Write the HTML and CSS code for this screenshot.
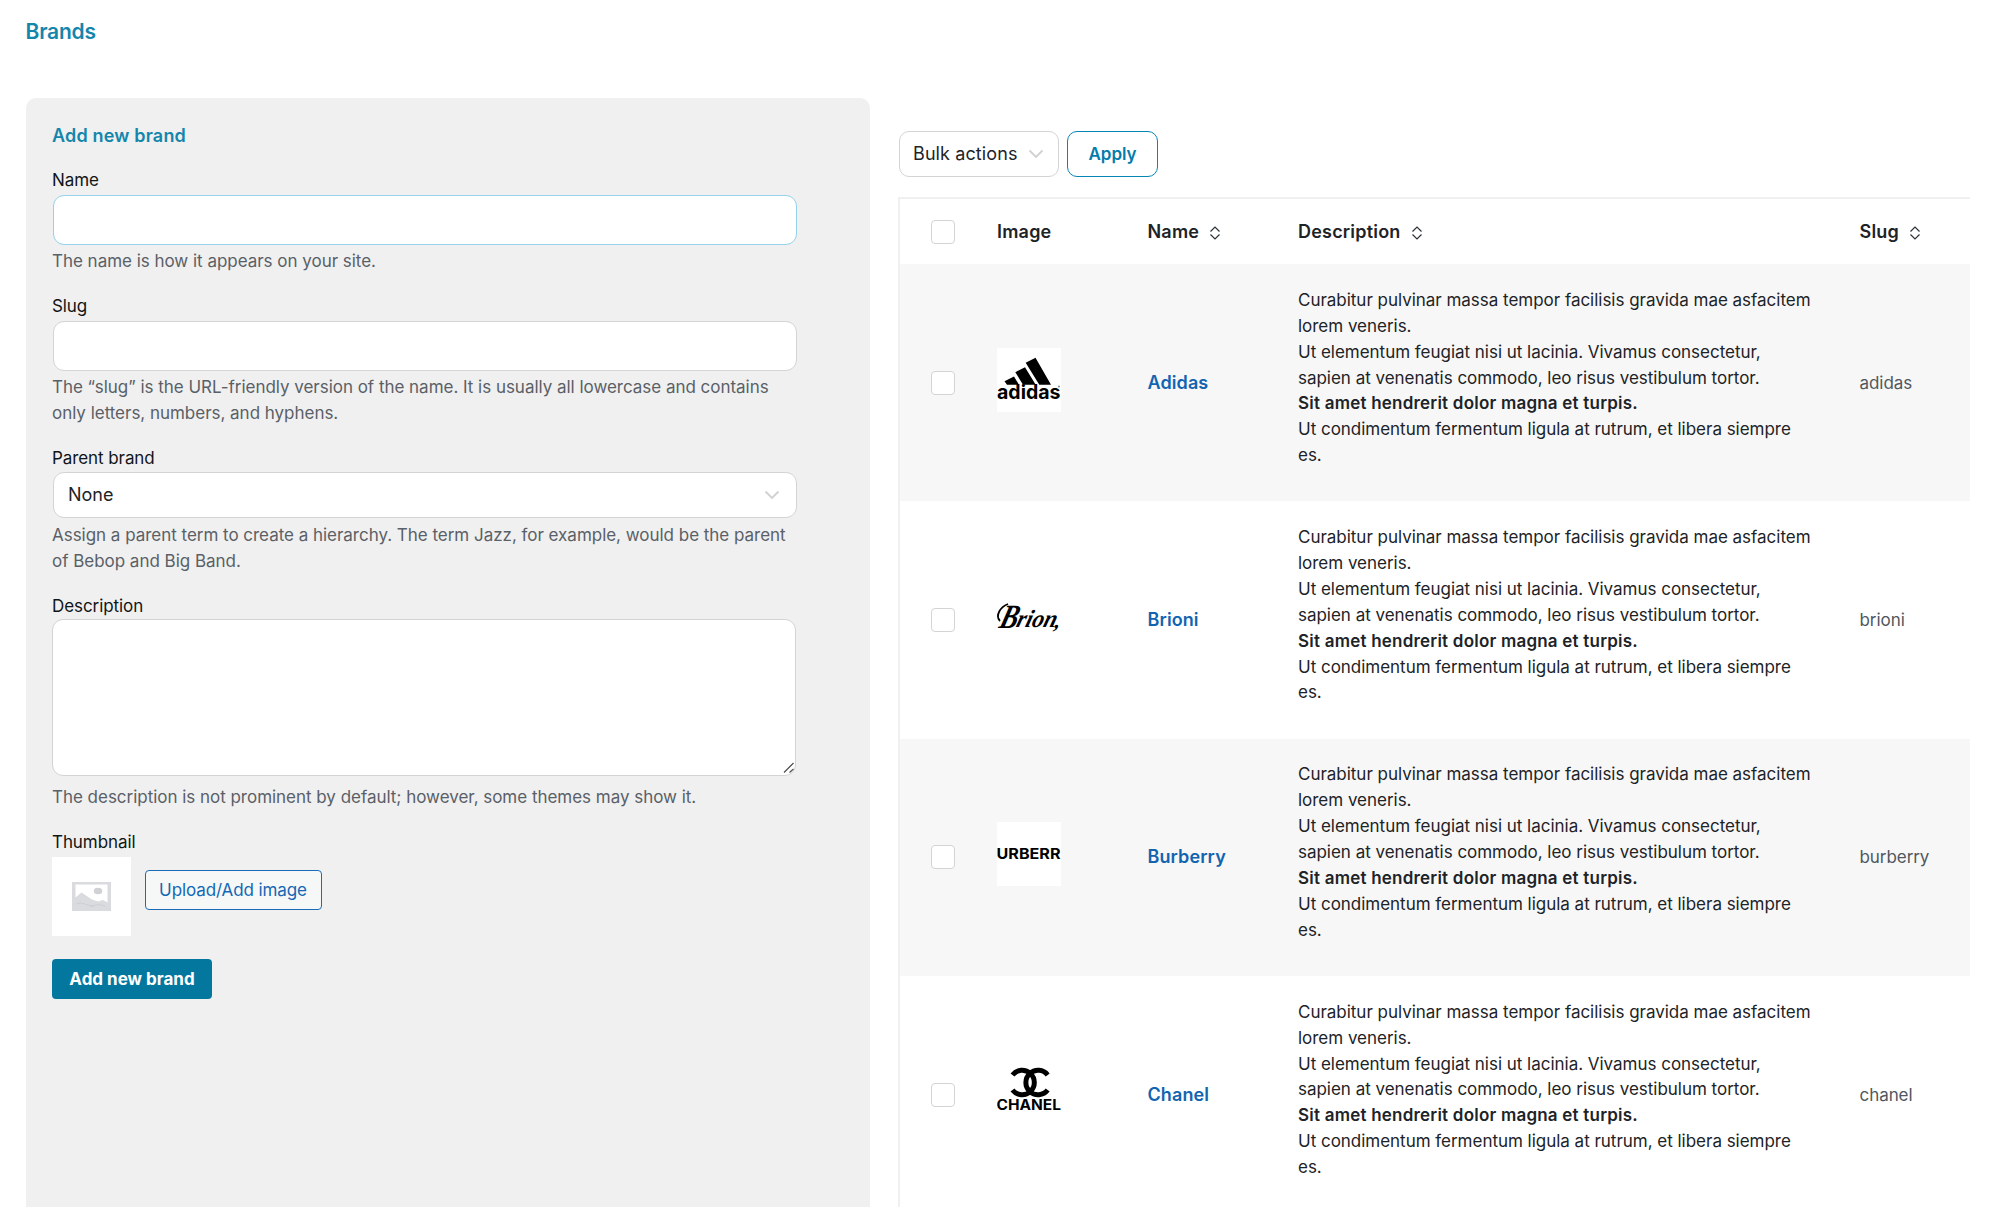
FILE: index.html
```html
<!DOCTYPE html>
<html lang="en">
<head>
<meta charset="utf-8">
<title>Brands</title>
<link rel="stylesheet" href="styles.css">
</head>
<body>
<h1 class="page-title">Brands</h1>
<main class="columns">
  <form class="panel">
    <h2 class="panel-title">Add new brand</h2>
    <div class="field">
      <label class="label">Name</label>
      <input class="control control-active" type="text">
      <p class="help">The name is how it appears on your site.</p>
    </div>
    <div class="field">
      <label class="label">Slug</label>
      <input class="control" type="text">
      <p class="help">The “slug” is the URL-friendly version of the name. It is usually all lowercase and contains only letters, numbers, and hyphens.</p>
    </div>
    <div class="field field-select">
      <label class="label">Parent brand</label>
      <div class="control select"><span>None</span>
        <svg width="16" height="10" viewBox="0 0 16 10"><path d="M1.5 1.5 8 8l6.500-6.500" fill="none" stroke="#d0d1d3" stroke-width="1.800"/></svg>
      </div>
      <p class="help">Assign a parent term to create a hierarchy. The term Jazz, for example, would be the parent of Bebop and Big Band.</p>
    </div>
    <div class="field field-text">
      <label class="label">Description</label>
      <div class="area-wrap">
        <textarea class="area"></textarea>
        <svg class="grip" width="12" height="12" viewBox="0 0 12 12"><path d="M1 10.500 10.500 1M6.500 10.500l4-3.500" fill="none" stroke="#4a4a4a" stroke-width="1.100"/></svg>
      </div>
      <p class="help">The description is not prominent by default; however, some themes may show it.</p>
    </div>
    <div class="field-thumb">
      <label class="label">Thumbnail</label>
      <div class="thumb-row">
        <div class="thumb">
          <svg width="39" height="29" viewBox="0 0 39 29"><path d="M0 0H39V29H0Z" fill="#d9dbdf"/><path d="M3.500 2.500H35.500V20.500L31 18l-5 1.500L20 17.500 9.500 10.500 3.500 15.500Z" fill="#fff"/><ellipse cx="26" cy="9" rx="4.200" ry="3.200" fill="#cfd1d5"/><path d="M4 22q5-2 9 0t10 2M18 25q8-4 15-1" fill="none" stroke="#cdcfd3"/></svg>
        </div>
        <button class="upload" type="button">Upload/Add image</button>
      </div>
    </div>
    <button class="submit" type="button">Add new brand</button>
  </form>

  <section class="list">
    <div class="toolbar">
      <div class="bulk"><span>Bulk actions</span>
        <svg width="16" height="10" viewBox="0 0 16 10"><path d="M1.500 1.500 8 8l6.500-6.500" fill="none" stroke="#d0d1d3" stroke-width="1.800"/></svg>
      </div>
      <button class="apply" type="button">Apply</button>
    </div>
    <div class="table">
      <div class="row head">
        <span class="check"></span>
        <span>Image</span>
        <span class="sortable">Name <svg class="sort" width="12" height="14" viewBox="0 0 12 14"><path d="M1.500 5.500 6 1l4.500 4.500M1.500 8.500 6 13l4.500-4.500" fill="none" stroke="#2c3338" stroke-width="1.200"/></svg></span>
        <span class="sortable">Description <svg class="sort" width="12" height="14" viewBox="0 0 12 14"><path d="M1.500 5.500 6 1l4.500 4.500M1.500 8.500 6 13l4.500-4.500" fill="none" stroke="#2c3338" stroke-width="1.200"/></svg></span>
        <span class="sortable">Slug <svg class="sort" width="12" height="14" viewBox="0 0 12 14"><path d="M1.500 5.500 6 1l4.500 4.500M1.500 8.500 6 13l4.500-4.500" fill="none" stroke="#2c3338" stroke-width="1.200"/></svg></span>
      </div>

      <div class="row item">
        <span class="check"></span>
        <svg class="logo" width="64" height="64" viewBox="0 0 64 64">
          <path d="M28.700 14.700 38.500 9.800 54 36.800H42.300ZM18.300 24.200 28 19.200 38.700 36.800H26ZM7.500 33.200 17 28.500 22 36.800H10Z"/>
          <text x="0" y="51.300" font-size="20" font-weight="700" textLength="63.500" lengthAdjust="spacingAndGlyphs">adidas</text>
          <circle cx="62" cy="38.500" r=".9" fill="#777"/>
        </svg>
        <a class="brand">Adidas</a>
        <p class="desc">Curabitur pulvinar massa tempor facilisis gravida mae asfacitem lorem veneris.<br>Ut elementum feugiat nisi ut lacinia. Vivamus consectetur, sapien at venenatis commodo, leo risus vestibulum tortor.<br><strong>Sit amet hendrerit dolor magna et turpis.</strong><br>Ut condimentum fermentum ligula at rutrum, et libera siempre es.</p>
        <span class="slug">adidas</span>
      </div>

      <div class="row item">
        <span class="check"></span>
        <svg class="logo" width="64" height="64" viewBox="0 0 64 64">
          <g class="script" transform="translate(0 43) skewX(-16)">
            <text x="1" y="0" font-size="34" textLength="18" lengthAdjust="spacingAndGlyphs">B</text>
            <text x="18" y="-1" font-size="25" textLength="40" lengthAdjust="spacingAndGlyphs">rion</text>
            <text x="57" y="0" font-size="22">,</text>
          </g>
          <path d="M3 36C-2 31 3 22 11 19" fill="none" stroke="#000" stroke-width="1.800"/>
        </svg>
        <a class="brand">Brioni</a>
        <p class="desc">Curabitur pulvinar massa tempor facilisis gravida mae asfacitem lorem veneris.<br>Ut elementum feugiat nisi ut lacinia. Vivamus consectetur, sapien at venenatis commodo, leo risus vestibulum tortor.<br><strong>Sit amet hendrerit dolor magna et turpis.</strong><br>Ut condimentum fermentum ligula at rutrum, et libera siempre es.</p>
        <span class="slug">brioni</span>
      </div>

      <div class="row item">
        <span class="check"></span>
        <svg class="logo" width="64" height="64" viewBox="0 0 64 64">
          <text x="-.5" y="37.200" font-size="15" font-weight="700" textLength="64" lengthAdjust="spacingAndGlyphs">URBERR</text>
        </svg>
        <a class="brand">Burberry</a>
        <p class="desc">Curabitur pulvinar massa tempor facilisis gravida mae asfacitem lorem veneris.<br>Ut elementum feugiat nisi ut lacinia. Vivamus consectetur, sapien at venenatis commodo, leo risus vestibulum tortor.<br><strong>Sit amet hendrerit dolor magna et turpis.</strong><br>Ut condimentum fermentum ligula at rutrum, et libera siempre es.</p>
        <span class="slug">burberry</span>
      </div>

      <div class="row item">
        <span class="check"></span>
        <svg class="logo" width="64" height="64" viewBox="0 0 64 64">
          <path d="M50.700 15A12.200 12.200 0 1 0 50.700 30M15.500 15A12.200 12.200 0 1 1 15.500 30" fill="none" stroke="#000" stroke-width="5"/>
          <text x="-.5" y="50" font-size="14" font-weight="700" textLength="64.500" lengthAdjust="spacingAndGlyphs">CHANEL</text>
        </svg>
        <a class="brand">Chanel</a>
        <p class="desc">Curabitur pulvinar massa tempor facilisis gravida mae asfacitem lorem veneris.<br>Ut elementum feugiat nisi ut lacinia. Vivamus consectetur, sapien at venenatis commodo, leo risus vestibulum tortor.<br><strong>Sit amet hendrerit dolor magna et turpis.</strong><br>Ut condimentum fermentum ligula at rutrum, et libera siempre es.</p>
        <span class="slug">chanel</span>
      </div>
    </div>
  </section>
</main>
</body>
</html>
```
FILE: styles.css
```css
* { box-sizing: border-box; }

body {
  margin: 0;
  height: 1207px;
  overflow: hidden;
  background: #fff;
  color: #1d2327;
  font: 17px/26px Inter, "Liberation Sans", sans-serif;
}

h1, h2, p { margin: 0; }
button { font-family: inherit; }

.page-title {
  height: 98px;
  padding: 19px 0 0 25.5px;
  color: #1486ab;
  font-size: 21px;
  font-weight: 600;
  line-height: 26px;
  letter-spacing: -0.2px;
}

.columns {
  display: flex;
  gap: 28.5px;
  height: 1109px;
  padding: 0 30px 0 25.5px;
}

/* Form */
.panel {
  width: 844px;
  flex: none;
  padding: 25px 72px 0 26.5px;
  border-radius: 10px 10px 0 0;
  background: #f0f0f0;
}

.panel-title {
  margin-bottom: 18px;
  color: #1486ab;
  font-size: 18px;
  font-weight: 600;
  line-height: 26px;
  letter-spacing: 0.18px;
}

.field { margin-bottom: 19px; }

.label {
  display: block;
  margin-bottom: 2px;
  color: #101517;
  letter-spacing: -0.08px;
}

.control {
  display: block;
  width: 744px;
  height: 50px;
  margin-left: 1px;
  border: 1px solid #d3d4d5;
  border-radius: 11px;
  background: #fff;
  outline: none;
}

.control-active { border-color: #93d2ea; }

.help {
  margin-top: 3px;
  color: #5a6067;
  letter-spacing: -0.025px;
}

.field-select .label { margin-bottom: 1px; }
.field-select .help { margin-top: 4px; }

.select {
  display: flex;
  align-items: center;
  justify-content: space-between;
  height: 46px;
  padding: 0 16px 0 14px;
  color: #1d2327;
  font-size: 18px;
}

.field-text .label { margin-bottom: 0; }
.field-text .help { margin-top: 8px; }

.area-wrap {
  position: relative;
  width: 744px;
  height: 157px;
}

.area {
  display: block;
  width: 100%;
  height: 100%;
  border: 1px solid #d3d4d5;
  border-radius: 11px;
  background: #fff;
  resize: none;
}

.grip {
  position: absolute;
  right: 1px;
  bottom: 2px;
}

.thumb-row {
  display: flex;
  gap: 13.5px;
  margin-bottom: 23px;
}

.thumb {
  display: grid;
  place-items: center;
  width: 79px;
  height: 79px;
  background: #fff;
}

.upload {
  width: 177px;
  height: 40px;
  margin-top: 13px;
  padding: 0;
  border: 1px solid #1a6cb5;
  border-radius: 4px;
  background: #f6f7f7;
  color: #1367b4;
  font-size: 17px;
  letter-spacing: -0.1px;
}

.submit {
  width: 160px;
  height: 40px;
  padding: 0;
  border: 0;
  border-radius: 4px;
  background: #04779f;
  color: #fff;
  font-size: 17px;
  font-weight: 700;
}

/* Brand list */
.list { flex: 1; }

.toolbar {
  display: flex;
  gap: 8px;
  height: 99px;
  padding: 33px 0 0 1px;
}

.bulk {
  display: flex;
  align-items: center;
  gap: 10px;
  width: 160px;
  height: 46px;
  padding-left: 13px;
  border: 1px solid #d3d4d5;
  border-radius: 10px;
  font-size: 18px;
  letter-spacing: 0.1px;
}

.apply {
  width: 91px;
  height: 46px;
  padding: 0;
  border: 1px solid #0785b5;
  border-radius: 10px;
  background: #fff;
  color: #047cab;
  font-size: 17px;
  font-weight: 600;
}

.table {
  border-top: 2px solid #f0f0f0;
  border-left: 2px solid #f0f0f0;
}

.row {
  display: grid;
  grid-template-columns: 66.5px 150.5px 150.5px 561.5px 1fr;
  align-items: center;
  height: 237.3px;
  padding-left: 30.5px;
}

.head {
  height: 65px;
  font-size: 18px;
  font-weight: 600;
  letter-spacing: 0.2px;
}

.sortable {
  display: flex;
  align-items: center;
  gap: 10px;
}

.sort { margin-top: 3px; }

.item:nth-child(even) { background: #f7f7f7; }

.check {
  width: 24px;
  height: 24px;
  border: 1px solid #d3d4d5;
  border-radius: 4px;
  background: #fff;
}

.logo {
  display: block;
  margin-bottom: 6px;
  background: #fff;
  font-family: Inter, sans-serif;
}

.script {
  font-family: "Liberation Serif", serif;
  font-style: italic;
  font-weight: 700;
}

.brand {
  color: #1264b0;
  font-size: 18px;
  font-weight: 600;
  letter-spacing: 0.1px;
}

.desc {
  width: 517px;
  margin-bottom: 8.4px;
  line-height: 25.87px;
  letter-spacing: -0.02px;
}

.desc strong {
  font-weight: 600;
  letter-spacing: 0.215px;
}

.slug {
  color: #50575e;
  letter-spacing: -0.06px;
}
```
